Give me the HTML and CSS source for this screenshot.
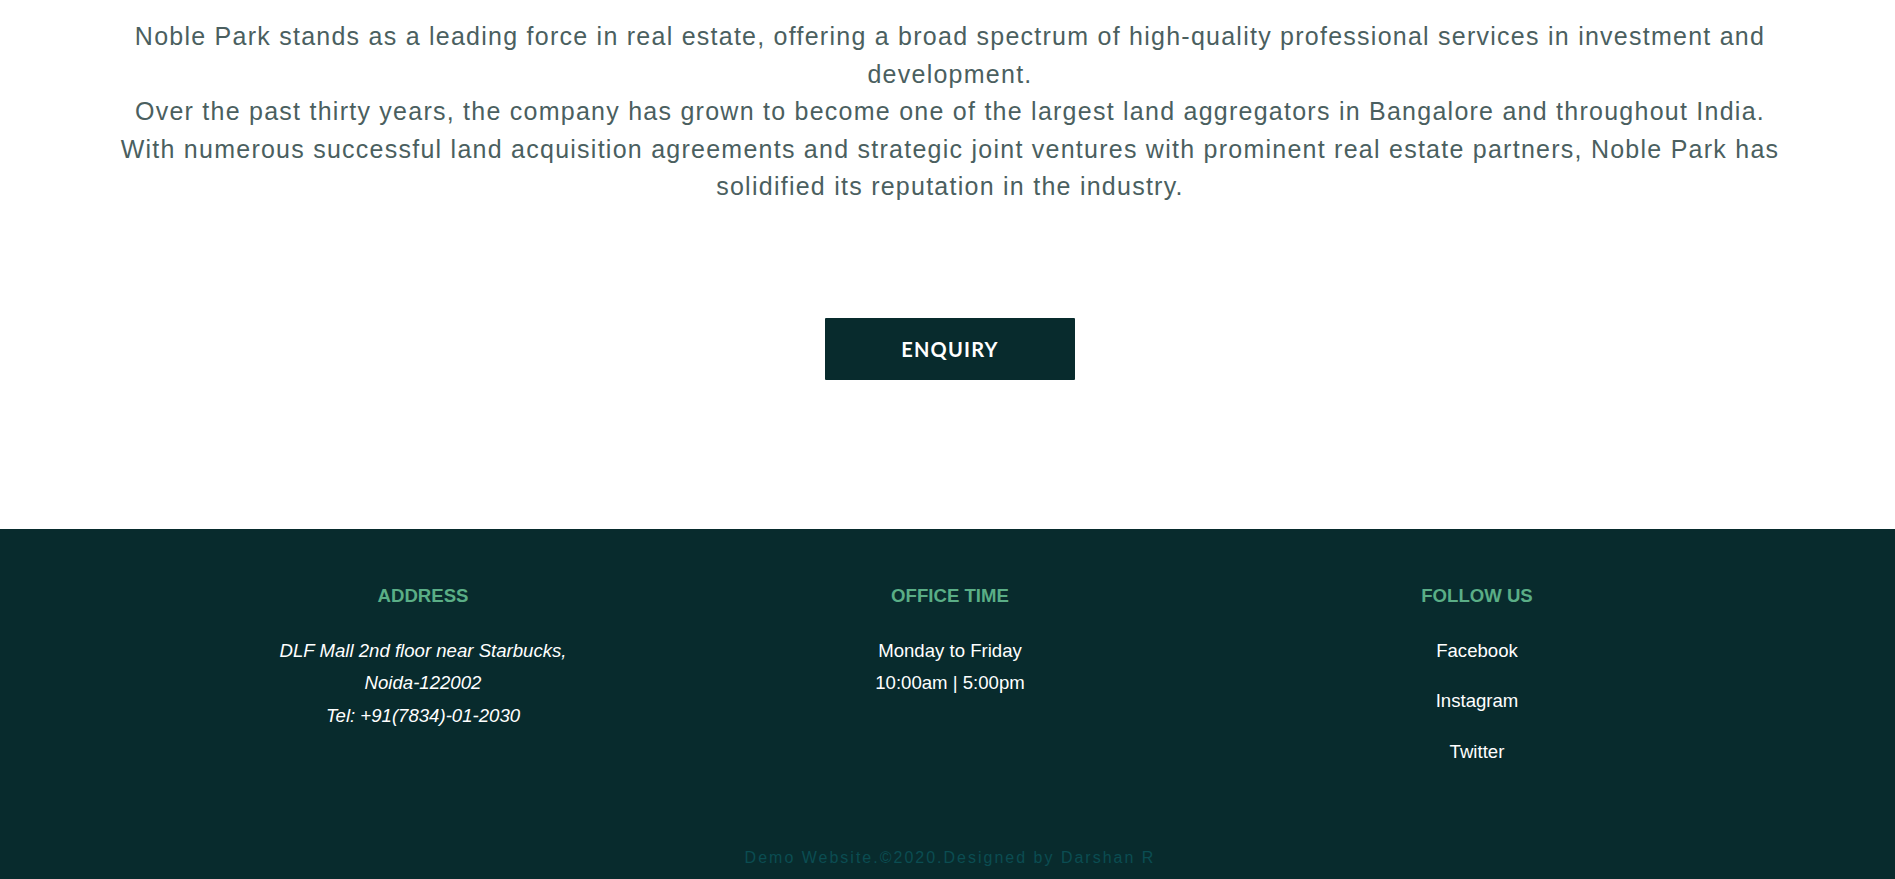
FILE: index.html
```html
<!DOCTYPE html>
<html lang="en">
<head>
<meta charset="utf-8">
<title>Noble Park</title>
<link rel="stylesheet" href="styles.css">
</head>
<body>
<main class="about">
  <p class="about-text">Noble Park stands as a leading force in real estate, offering a broad spectrum of high-quality professional services in investment and development.<br>Over the past thirty years, the company has grown to become one of the largest land aggregators in Bangalore and throughout India.<br>With numerous successful land acquisition agreements and strategic joint ventures with prominent real estate partners, Noble Park has solidified its reputation in the industry.</p>
  <div class="cta">
    <a class="btn" href="#">ENQUIRY</a>
  </div>
</main>
<footer class="footer">
  <div class="footer-cols">
    <div class="col">
      <h4 class="col-title">ADDRESS</h4>
      <p class="col-text italic">DLF Mall 2nd floor near Starbucks,<br>Noida-122002<br>Tel: +91(7834)-01-2030</p>
    </div>
    <div class="col">
      <h4 class="col-title">OFFICE TIME</h4>
      <p class="col-text">Monday to Friday<br>10:00am | 5:00pm</p>
    </div>
    <div class="col">
      <h4 class="col-title">FOLLOW US</h4>
      <ul class="links">
        <li><a href="#">Facebook</a></li>
        <li><a href="#">Instagram</a></li>
        <li><a href="#">Twitter</a></li>
      </ul>
    </div>
  </div>
  <p class="copy">Demo Website.©2020.Designed by Darshan R</p>
</footer>
</body>
</html>
```
FILE: styles.css
```css
* { box-sizing: border-box; }
html, body { margin: 0; padding: 0; }
body {
  font-family: "Liberation Sans", Arial, sans-serif;
  background: #ffffff;
  padding-left: 5px;
}
.about {
  padding: 18px 0 149px;
}
.about-text {
  margin: 0 auto;
  max-width: 1700px;
  text-align: center;
  font-size: 25px;
  line-height: 37.5px;
  letter-spacing: 1.25px;
  color: #4b5f5f;
}
.cta {
  display: flex;
  justify-content: center;
  margin-top: 112px;
}
.btn {
  display: flex;
  align-items: center;
  justify-content: center;
  width: 250px;
  height: 62px;
  background: #082b2d;
  color: #ffffff;
  text-decoration: none;
  font-family: Lato, "Open Sans", sans-serif;
  font-weight: 700;
  font-size: 20px;
  letter-spacing: 1.2px;
  border-radius: 1px;
}
.footer {
  background: #082b2d;
  padding: 56px 0 12px;
  margin-left: -5px;
  padding-left: 5px;
}
.footer-cols {
  max-width: 1581px;
  margin: 0 auto;
  display: grid;
  grid-template-columns: repeat(3, 1fr);
  text-align: center;
}
.col-title {
  margin: 0 0 28px;
  font-size: 18.6px;
  line-height: 22px;
  font-weight: 700;
  color: #5aae86;
}
.col-text {
  margin: 0;
  font-size: 18.6px;
  line-height: 32.5px;
  color: #ffffff;
}
.italic { font-style: italic; }
.links {
  list-style: none;
  margin: 0;
  padding: 0;
  display: flex;
  flex-direction: column;
  gap: 18.5px;
}
.links li {
  font-size: 18.6px;
  line-height: 32px;
}
.links a {
  color: #ffffff;
  text-decoration: none;
}
.copy {
  margin: 80px 0 0;
  text-align: center;
  font-size: 16px;
  line-height: 20px;
  letter-spacing: 2px;
  color: #0b4d52;
}
```
